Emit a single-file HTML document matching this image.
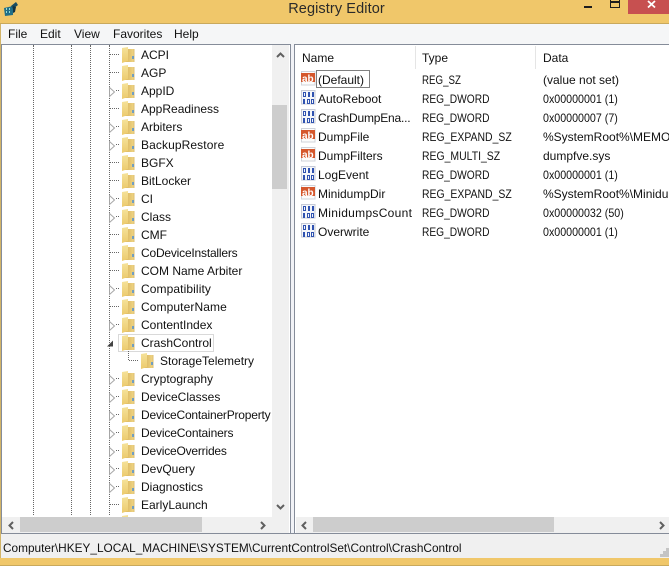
<!DOCTYPE html>
<html><head><meta charset="utf-8">
<style>
html,body{margin:0;padding:0}
body{width:669px;height:566px;position:relative;overflow:hidden;background:#f4f5f7;font:12px "Liberation Sans",sans-serif;color:#111}
div{position:absolute;white-space:nowrap}
svg{position:absolute;overflow:visible}
.t{left:141px;height:18px;line-height:18px;font-size:12px;margin-top:1px}
.r{height:19px;line-height:19px;font-size:12px;margin-top:1px;transform-origin:0 50%}
.m{top:24px;line-height:20px;font-size:12px}
.v{width:0;border-left:1px dotted #666;top:45px;height:470px}
.a{transform:scaleX(.81)}.b{transform:scaleX(.85)}.c{transform:scaleX(.87)}.d{transform:scaleX(.89)}
</style></head><body>
<svg width="0" height="0" style="position:absolute"><defs>
<linearGradient id="g1" x1="0" y1="0" x2="0" y2="1"><stop offset="0" stop-color="#f5e29a"/><stop offset="1" stop-color="#ecca6c"/></linearGradient>
<linearGradient id="g2" x1="0" y1="0" x2="1" y2="0"><stop offset="0" stop-color="#cfa84e"/><stop offset="1" stop-color="#f0d585"/></linearGradient>
<g id="f"><path d="M1 2h12v13h-12z" fill="url(#g2)"/><path d="M1 1l6-1v14l-6 2z" fill="url(#g1)"/><path d="M13 2v13" stroke="#dcbf72" stroke-width="1"/><path d="M12 9v3" stroke="#4a90d9" stroke-width="1.500"/></g>
<g id="ab"><path d="M.5.500h13.500v13.500h-13.500z" fill="#fcfcfc" stroke="#d0d3da"/><rect x="0" y="2" width="14" height="9" fill="#d5572c"/></g>
<g id="bn" shape-rendering="crispEdges"><path d="M.5.500h13.500v13.500h-13.500z" fill="#f4f6fa" stroke="#c6cad6"/><path d="M2 2h3v5h-3zM3 3v3h1v-3zM7 2h2v5h-2zM11 2h2v5h-2zM2 9h2v5h-2zM6 9h3v5h-3zM7 10v3h1v-3zM10 9h3v5h-3zM11 10v3h1v-3z" fill="#2f52b0" fill-rule="evenodd"/></g>
<path id="o" d="M.5.500l5 4.500-5 4.500z" fill="#fff" stroke="#a6a6a6"/>
</defs></svg>

<!-- title bar -->
<div style="left:0;top:0;width:669px;height:23px;background:#f0c76a;border-bottom:1px solid #c9a95c"></div>
<svg style="left:3px;top:1px" width="17" height="16"><path d="M1 7l9-2 0 9-8 1z" fill="#1f6f88"/><path d="M3 8h1M6 8h1M3 11h1M6 11h1" stroke="#bfe" stroke-width="1.500"/><path d="M8 5l5-4 2 3-5 4z" fill="#1a4d60"/><path d="M10 5l3 1-1 5-2 1z" fill="#14323f"/></svg>
<div style="left:2px;width:669px;text-align:center;top:0;line-height:18px;font-size:14.500px;color:#2a2a2a;letter-spacing:.1px">Registry Editor</div>
<div style="left:584px;top:6px;width:8px;height:2px;background:#1d1d1d"></div>
<div style="left:610px;top:0;width:8px;height:7px;border:1px solid #1d1d1d;border-top:0"></div>
<div style="left:610px;top:1px;width:10px;height:2px;background:#1d1d1d"></div>
<div style="left:628px;top:0;width:41px;height:14px;background:#c75050"></div>
<svg style="left:647px;top:1px" width="10" height="8"><path d="M1 0l7 6.500M8 0l-7 6.500" stroke="#fff" stroke-width="1.800"/></svg>

<!-- frame/menu -->
<div style="left:0;top:24px;width:1px;height:542px;background:#d2b468"></div>
<div style="left:1px;top:24px;width:668px;height:20px;background:#f5f6f7"></div>
<div class="m" style="left:8px">File</div>
<div class="m" style="left:40px">Edit</div>
<div class="m" style="left:74px">View</div>
<div class="m" style="left:113px">Favorites</div>
<div class="m" style="left:174px">Help</div>

<!-- panes -->
<div style="left:1px;top:44px;width:288px;height:489px;background:#fff;border-top:1px solid #858c99;border-left:1px solid #858c99;border-right:1px solid #858c99"></div>
<div style="left:294px;top:44px;width:375px;height:489px;background:#fff;border-top:1px solid #858c99;border-left:1px solid #858c99"></div>
<div style="left:291px;top:45px;width:3px;height:489px;background:#f1f2f6"></div>

<div class="v" style="left:33px"></div><div class="v" style="left:71px"></div><div class="v" style="left:90px"></div><div class="v" style="left:109px"></div>

<!-- tree rows -->
<div class="t" style="top:45px">ACPI</div>
<div class="t" style="top:63px">AGP</div>
<div class="t" style="top:81px">AppID</div>
<div class="t" style="top:99px">AppReadiness</div>
<div class="t" style="top:117px">Arbiters</div>
<div class="t" style="top:135px;letter-spacing:.1px">BackupRestore</div>
<div class="t" style="top:153px">BGFX</div>
<div class="t" style="top:171px">BitLocker</div>
<div class="t" style="top:189px">CI</div>
<div class="t" style="top:207px">Class</div>
<div class="t" style="top:225px">CMF</div>
<div class="t" style="top:243px;letter-spacing:-.2px">CoDeviceInstallers</div>
<div class="t" style="top:261px">COM Name Arbiter</div>
<div class="t" style="top:279px;letter-spacing:.1px">Compatibility</div>
<div class="t" style="top:297px;letter-spacing:.1px">ComputerName</div>
<div class="t" style="top:315px">ContentIndex</div>
<div style="left:118px;top:334px;width:94px;height:16px;border:1px solid #d9d9d9"></div>
<div class="t" style="top:333px">CrashControl</div>
<div class="t" style="top:351px;left:160px">StorageTelemetry</div>
<div class="t" style="top:369px">Cryptography</div>
<div class="t" style="top:387px">DeviceClasses</div>
<div class="t" style="top:405px;width:131px;overflow:hidden;letter-spacing:-.2px">DeviceContainerProperty</div>
<div class="t" style="top:423px;letter-spacing:-.15px">DeviceContainers</div>
<div class="t" style="top:441px;letter-spacing:-.2px">DeviceOverrides</div>
<div class="t" style="top:459px">DevQuery</div>
<div class="t" style="top:477px">Diagnostics</div>
<div class="t" style="top:495px">EarlyLaunch</div>

<svg style="left:0;top:0" width="669" height="566">
<g stroke="#666" stroke-dasharray="1 1" stroke-width="1" fill="none" shape-rendering="crispEdges">
<path d="M110 54.500h10M110 72.500h10M110 108.500h10M110 162.500h10M110 180.500h10M110 234.500h10M110 252.500h10M110 270.500h10M110 306.500h10M110 504.500h10"/>
<path d="M128.500 351v9.500h10"/>
<path d="M116 90.500h4M116 126.500h4M116 144.500h4M116 198.500h4M116 216.500h4M116 288.500h4M116 324.500h4M116 378.500h4M116 396.500h4M116 414.500h4M116 432.500h4M116 450.500h4M116 468.500h4M116 486.500h4"/>
</g>
<g><use href="#o" x="109" y="87"/><use href="#o" x="109" y="123"/><use href="#o" x="109" y="141"/><use href="#o" x="109" y="195"/><use href="#o" x="109" y="213"/><use href="#o" x="109" y="285"/><use href="#o" x="109" y="321"/><use href="#o" x="109" y="375"/><use href="#o" x="109" y="393"/><use href="#o" x="109" y="411"/><use href="#o" x="109" y="429"/><use href="#o" x="109" y="447"/><use href="#o" x="109" y="465"/><use href="#o" x="109" y="483"/></g>
<path d="M107 346.500h6v-6z" fill="#444"/>
<use href="#f" x="121" y="47"/><use href="#f" x="121" y="65"/><use href="#f" x="121" y="83"/><use href="#f" x="121" y="101"/><use href="#f" x="121" y="119"/><use href="#f" x="121" y="137"/><use href="#f" x="121" y="155"/><use href="#f" x="121" y="173"/><use href="#f" x="121" y="191"/><use href="#f" x="121" y="209"/><use href="#f" x="121" y="227"/><use href="#f" x="121" y="245"/><use href="#f" x="121" y="263"/><use href="#f" x="121" y="281"/><use href="#f" x="121" y="299"/><use href="#f" x="121" y="317"/><use href="#f" x="121" y="335"/><use href="#f" x="140" y="353"/><use href="#f" x="121" y="371"/><use href="#f" x="121" y="389"/><use href="#f" x="121" y="407"/><use href="#f" x="121" y="425"/><use href="#f" x="121" y="443"/><use href="#f" x="121" y="461"/><use href="#f" x="121" y="479"/><use href="#f" x="121" y="497"/><use href="#f" x="121" y="515"/>
</svg>

<!-- left scrollbars -->
<div style="left:272px;top:45px;width:17px;height:472px;background:#f0f0f0"></div>
<div style="left:272px;top:105px;width:15px;height:84px;background:#cdcdcd"></div>
<svg style="left:276px;top:52px" width="9" height="6"><path d="M1 5l3.500-3.500 3.500 3.500" fill="none" stroke="#606060" stroke-width="2"/></svg>
<svg style="left:276px;top:504px" width="9" height="6"><path d="M1 1l3.500 3.500 3.500-3.500" fill="none" stroke="#606060" stroke-width="2"/></svg>
<div style="left:2px;top:517px;width:287px;height:16px;background:#f0f0f0"></div>
<div style="left:20px;top:517px;width:182px;height:15px;background:#cdcdcd"></div>
<svg style="left:8px;top:521px" width="6" height="9"><path d="M5 1l-3.500 3.500 3.500 3.500" fill="none" stroke="#606060" stroke-width="2"/></svg>
<svg style="left:260px;top:521px" width="6" height="9"><path d="M1 1l3.500 3.500-3.500 3.500" fill="none" stroke="#606060" stroke-width="2"/></svg>

<!-- list header -->
<div class="r" style="left:302px;top:48px">Name</div>
<div class="r" style="left:422px;top:48px">Type</div>
<div class="r" style="left:543px;top:48px">Data</div>
<div style="left:415px;top:46px;width:1px;height:23px;background:#e5e5e5"></div>
<div style="left:535px;top:46px;width:1px;height:23px;background:#e5e5e5"></div>

<!-- list rows -->
<svg style="left:0;top:0" width="669" height="566">
<use href="#ab" x="301" y="71"/><use href="#bn" x="301" y="90"/><use href="#bn" x="301" y="109"/><use href="#ab" x="301" y="128"/><use href="#ab" x="301" y="147"/><use href="#bn" x="301" y="166"/><use href="#ab" x="301" y="185"/><use href="#bn" x="301" y="204"/><use href="#bn" x="301" y="223"/>
<g font-family="Liberation Sans" font-size="10" font-weight="bold" fill="#fff"><text x="302" y="82">ab</text><text x="302" y="139">ab</text><text x="302" y="158">ab</text><text x="302" y="196">ab</text></g>
<rect x="316.500" y="70.500" width="53" height="17" fill="none" stroke="#000" stroke-dasharray="1 1" shape-rendering="crispEdges"/>
</svg>
<div class="r" style="left:318px;top:70px">(Default)</div><div class="r a" style="left:422px;top:70px">REG_SZ</div><div class="r" style="left:543px;top:70px">(value not set)</div>
<div class="r" style="left:318px;top:89px">AutoReboot</div><div class="r b" style="left:422px;top:89px">REG_DWORD</div><div class="r d" style="left:543px;top:89px">0x00000001 (1)</div>
<div class="r" style="left:318px;top:108px;letter-spacing:-.2px">CrashDumpEna...</div><div class="r b" style="left:422px;top:108px">REG_DWORD</div><div class="r d" style="left:543px;top:108px">0x00000007 (7)</div>
<div class="r" style="left:318px;top:127px">DumpFile</div><div class="r c" style="left:422px;top:127px">REG_EXPAND_SZ</div><div class="r" style="left:543px;top:127px;width:126px;overflow:hidden">%SystemRoot%\MEMORY.DMP</div>
<div class="r" style="left:318px;top:146px">DumpFilters</div><div class="r c" style="left:422px;top:146px">REG_MULTI_SZ</div><div class="r" style="left:543px;top:146px">dumpfve.sys</div>
<div class="r" style="left:318px;top:165px">LogEvent</div><div class="r b" style="left:422px;top:165px">REG_DWORD</div><div class="r d" style="left:543px;top:165px">0x00000001 (1)</div>
<div class="r" style="left:318px;top:184px">MinidumpDir</div><div class="r c" style="left:422px;top:184px">REG_EXPAND_SZ</div><div class="r" style="left:543px;top:184px;width:126px;overflow:hidden">%SystemRoot%\Minidump</div>
<div class="r" style="left:318px;top:203px;letter-spacing:.3px">MinidumpsCount</div><div class="r b" style="left:422px;top:203px">REG_DWORD</div><div class="r d" style="left:543px;top:203px">0x00000032 (50)</div>
<div class="r" style="left:318px;top:222px">Overwrite</div><div class="r b" style="left:422px;top:222px">REG_DWORD</div><div class="r d" style="left:543px;top:222px">0x00000001 (1)</div>

<!-- right scrollbar -->
<div style="left:296px;top:517px;width:373px;height:16px;background:#f0f0f0"></div>
<div style="left:313px;top:517px;width:241px;height:15px;background:#cdcdcd"></div>
<svg style="left:301px;top:521px" width="6" height="9"><path d="M5 1l-3.500 3.500 3.500 3.500" fill="none" stroke="#606060" stroke-width="2"/></svg>
<svg style="left:659px;top:521px" width="6" height="9"><path d="M1 1l3.500 3.500-3.500 3.500" fill="none" stroke="#606060" stroke-width="2"/></svg>

<!-- status -->
<div style="left:1px;top:533px;width:668px;height:1px;background:#858c99"></div>
<div style="left:1px;top:534px;width:668px;height:24px;background:#f0f0f0"></div>
<div style="left:3px;top:538px;line-height:20px;font-size:12px;transform:scaleX(.985);transform-origin:0 50%">Computer\HKEY_LOCAL_MACHINE\SYSTEM\CurrentControlSet\Control\CrashControl</div>
<svg style="left:660px;top:548px" width="9" height="10"><path d="M6 0h3v3h-3zM3 3h3v3h-3zM6 3h3v3h-3zM0 6h3v3h-3zM3 6h3v3h-3zM6 6h3v3h-3z" fill="#c4c4c4"/></svg>
<div style="left:0;top:558px;width:669px;height:7px;background:#f0c76a"></div>
<div style="left:0;top:565px;width:669px;height:1px;background:#c9a95c"></div>
</body></html>
